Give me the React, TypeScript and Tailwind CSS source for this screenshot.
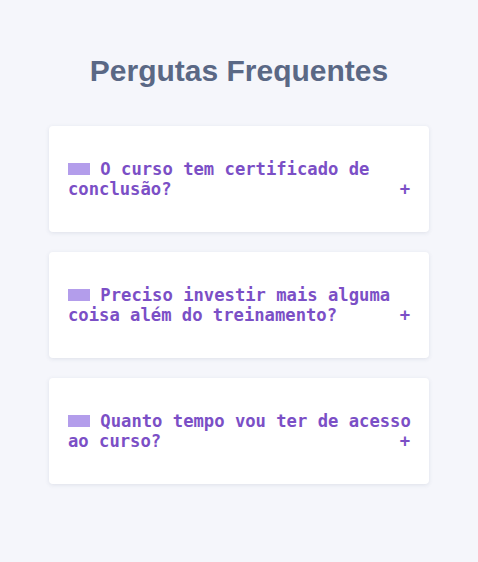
import React from 'react';

const faqs = [
  'O curso tem certificado de conclusão?',
  'Preciso investir mais alguma coisa além do treinamento?',
  'Quanto tempo vou ter de acesso ao curso?',
];

export default function App() {
  return (
    <main className="min-h-[562px] w-full bg-[#f5f6fb] pt-[53px]">
      <h1 className="text-center text-[30px] leading-[36px] font-bold text-[#5a6885] font-['Liberation_Sans',Arial,sans-serif]">
        Pergutas Frequentes
      </h1>

      <div className="w-[380px] mx-auto mt-[37px] flex flex-col gap-[20px]">
        {faqs.map((q) => (
          <div
            key={q}
            className="bg-white rounded-[4px] shadow-[0_1px_4px_rgba(60,70,110,0.12)] pl-[19px] pr-[17px] py-[33px]"
          >
            <p className="text-[17.2px] leading-[20px] font-bold text-[#7b4fc6] font-['DejaVu_Sans_Mono',monospace]">
              <span className="inline-block w-[22px] h-[12px] bg-[#b39deb] align-baseline"></span>{' '}
              {q}
              <span className="float-right pr-[2px]">+</span>
            </p>
          </div>
        ))}
      </div>
    </main>
  );
}
